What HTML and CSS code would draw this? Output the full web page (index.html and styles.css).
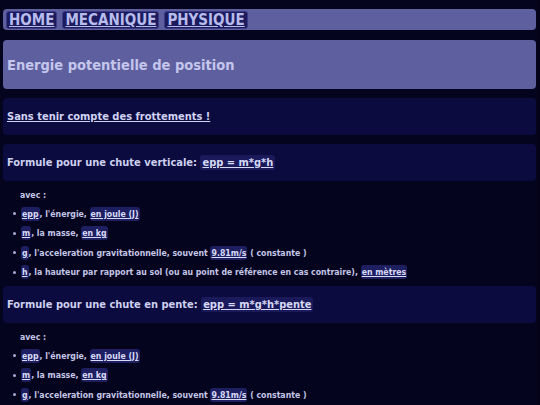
FILE: index.html
```html
<!DOCTYPE html>
<html lang="fr">
<head>
<meta charset="utf-8">
<title>Energie potentielle</title>
<link rel="stylesheet" href="styles.css">
</head>
<body>
<div class="page">
  <nav class="nav">
    <a class="navlink" href="#">HOME</a>
    <a class="navlink" href="#">MECANIQUE</a>
    <a class="navlink" href="#">PHYSIQUE</a>
  </nav>
  <header class="title">Energie potentielle de position</header>
  <section class="panel"><a class="sub" href="#">Sans tenir compte des frottements !</a></section>
  <section class="panel formula">Formule pour une chute verticale: <span class="code">epp = m*g*h</span></section>
  <div class="avec">avec :</div>
  <ul class="list">
    <li><span class="tag">epp</span>, l'énergie, <span class="tag">en joule (J)</span></li>
    <li><span class="tag">m</span>, la masse, <span class="tag">en kg</span></li>
    <li><span class="tag">g</span>, l'acceleration gravitationnelle, souvent <span class="tag">9.81m/s</span> ( constante )</li>
    <li><span class="tag">h</span>, la hauteur par rapport au sol (ou au point de référence en cas contraire), <span class="tag">en mètres</span></li>
  </ul>
  <section class="panel formula after-list">Formule pour une chute en pente: <span class="code">epp = m*g*h*pente</span></section>
  <div class="avec">avec :</div>
  <ul class="list">
    <li><span class="tag">epp</span>, l'énergie, <span class="tag">en joule (J)</span></li>
    <li><span class="tag">m</span>, la masse, <span class="tag">en kg</span></li>
    <li><span class="tag">g</span>, l'acceleration gravitationnelle, souvent <span class="tag">9.81m/s</span> ( constante )</li>
  </ul>
</div>
</body>
</html>
```
FILE: styles.css
```css
html {
  background: #030217;
}
body {
  margin: 0;
  background: #05041f;
  width: 537px;
  height: 405px;
  font-family: "DejaVu Sans Condensed", "DejaVu Sans", sans-serif;
  font-weight: bold;
  color: #c4c6e6;
  overflow: hidden;
}
.page {
  padding: 9px 1px 0 3px;
  display: flex;
  flex-direction: column;
}
.nav {
  background: #5e5f9e;
  border-radius: 4px;
  height: 21px;
  display: flex;
  align-items: center;
  gap: 5px;
  padding: 0 3px;
}
.navlink {
  background: #1b1b5e;
  border: 1px solid #3a3b84;
  border-radius: 3px;
  color: #b8bcec;
  font-size: 15px;
  line-height: 16px;
  padding: 0 2px;
  text-decoration: underline;
}
.title {
  margin-top: 10px;
  height: 48px;
  background: #5e5f9e;
  border-radius: 4px;
  display: flex;
  align-items: center;
  padding: 1px 4px 0;
  font-size: 14.5px;
  color: #c4c6ec;
}
.panel {
  margin-top: 9px;
  height: 37px;
  background: #0c0b3f;
  border-radius: 4px;
  display: flex;
  align-items: center;
  padding: 0 4px;
  font-size: 11px;
  color: #cdd0ee;
}
.panel.after-list {
  margin-top: 4px;
}
.sub {
  color: #d0d3f2;
  text-decoration: underline;
}
.formula {
  white-space: pre;
}
.code {
  background: #1a1a5a;
  border-radius: 3px;
  padding: 1px 2px;
  text-decoration: underline;
  color: #d6d8f4;
}
.avec {
  font-size: 8.7px;
  margin: 9px 0 0 17px;
  line-height: 10px;
}
.list {
  list-style: none;
  margin: 4px 0 0 0;
  padding: 0 0 0 9px;
  font-size: 8.7px;
}
.list li {
  display: flex;
  align-items: center;
  height: 19.5px;
  white-space: pre;
}
.list li::before {
  content: "";
  width: 3px;
  height: 3px;
  border-radius: 50%;
  background: #a8abd6;
  margin-left: 1px;
  margin-right: 5px;
}
.tag {
  background: #1e1f60;
  border-radius: 3px;
  padding: 2px 1px;
  text-decoration: underline;
  color: #d8daf6;
}
```
